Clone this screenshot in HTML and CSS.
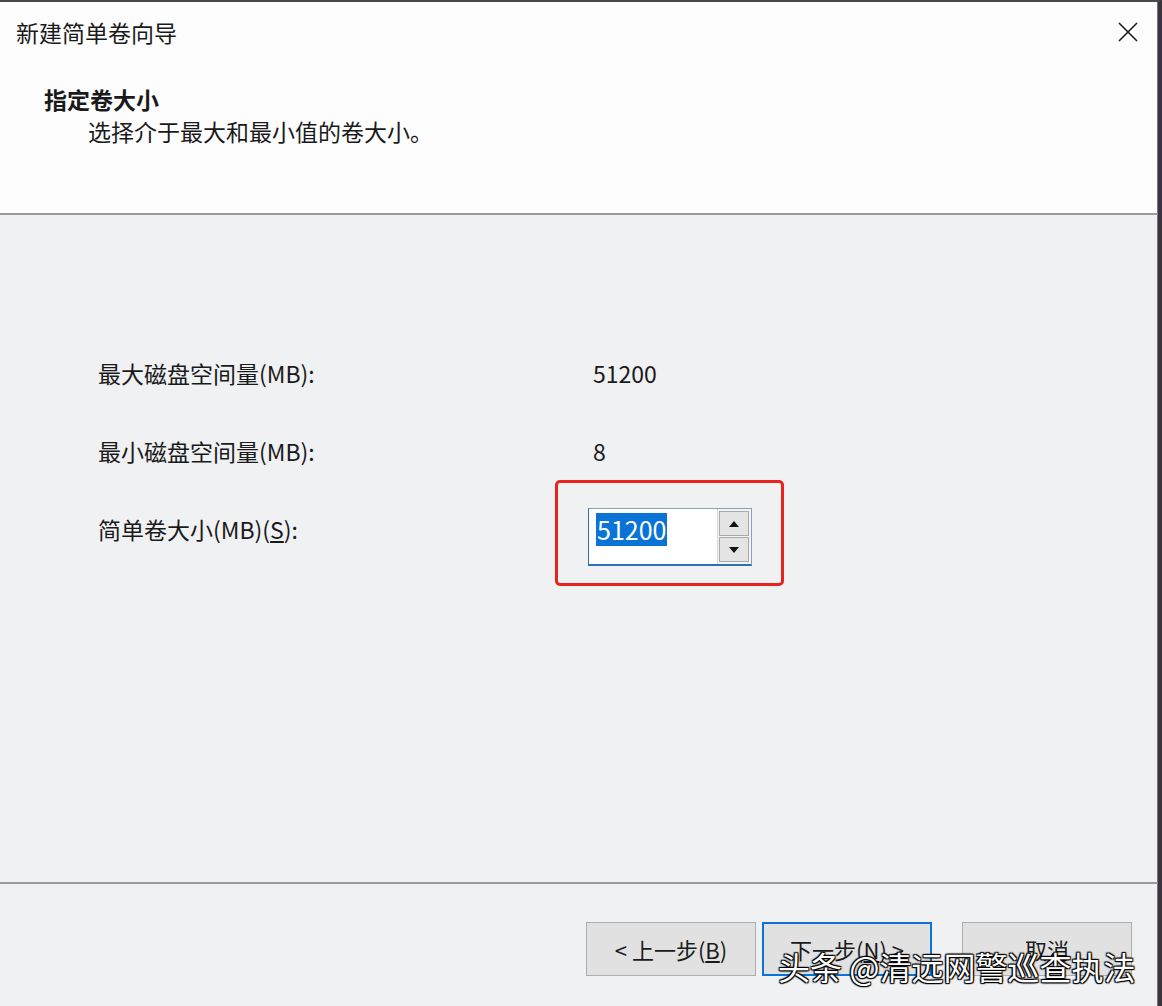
FILE: index.html
```html
<!DOCTYPE html>
<html lang="zh-CN">
<head>
<meta charset="utf-8">
<title>新建简单卷向导</title>
<link rel="stylesheet" href="styles.css">
</head>
<body>
<div class="window">
  <div class="header">
    <div class="titlebar">
      <span class="title">新建简单卷向导</span>
      <svg class="close" width="22" height="22" viewBox="0 0 22 22"><path d="M2 2 L20 20 M20 2 L2 20" stroke="#1a1a1a" stroke-width="1.6" fill="none"/></svg>
    </div>
    <div class="heading">指定卷大小</div>
    <div class="subtitle">选择介于最大和最小值的卷大小。</div>
  </div>
  <div class="content">
    <div class="grid">
      <div class="label">最大磁盘空间量(MB):</div>
      <div class="value">51200</div>
      <div class="label">最小磁盘空间量(MB):</div>
      <div class="value">8</div>
      <div class="label">简单卷大小(MB)(<u>S</u>):</div>
      <div class="value">
        <div class="spin">
          <div class="field"><span class="sel">51200</span></div>
          <div class="arrows">
            <div class="arrow"><svg width="10" height="6" viewBox="0 0 10 6"><path d="M0 6 L5 0 L10 6 Z" fill="#111"/></svg></div>
            <div class="arrow"><svg width="10" height="6" viewBox="0 0 10 6"><path d="M0 0 L10 0 L5 6 Z" fill="#111"/></svg></div>
          </div>
        </div>
      </div>
    </div>
  </div>
  <div class="footer">
    <div class="btn">&lt; 上一步(<u>B</u>)</div>
    <div class="btn default">下一步(<u>N</u>) &gt;</div>
    <div class="btn cancel">取消</div>
  </div>
  <div class="watermark">头条 @清远网警巡查执法</div>
</div>
</body>
</html>
```
FILE: styles.css
```css
* { box-sizing: border-box; }
html, body {
  margin: 0;
  padding: 0;
  width: 1162px;
  height: 1006px;
  overflow: hidden;
  background: #3c3240;
}
body {
  font-family: "Noto Sans CJK SC", "Noto Sans", sans-serif;
  color: #1a1a1a;
  font-size: 23px;
}
.window {
  position: relative;
  width: 1162px;
  height: 1006px;
  border-top: 2px solid #4a4a4a;
  border-right: 4px solid #3c3240;
  display: flex;
  flex-direction: column;
  background: #f0f1f3;
}
.header {
  height: 213px;
  background: #fdfdfe;
  border-bottom: 2px solid #9a9a9a;
  padding: 15px 0 0 0;
  border-right: 1px solid #777;
}
.titlebar {
  display: flex;
  justify-content: space-between;
  align-items: center;
  height: 30px;
  padding: 0 18px 0 16px;
}
.title { line-height: 30px; }
.close { margin-top: -1px; }
.heading {
  font-weight: bold;
  line-height: 30px;
  margin: 37px 0 0 44px;
}
.subtitle {
  line-height: 30px;
  margin: 2px 0 0 88px;
}
.content {
  flex: 1;
  padding: 143px 0 0 98px;
  border-bottom: 2px solid #9a9a9a;
  border-right: 1px solid #777;
}
.grid {
  display: grid;
  grid-template-columns: 495px auto;
  row-gap: 48px;
  align-items: start;
  line-height: 30px;
}
.value { font-size: 23px; }
.spin {
  position: relative;
  display: inline-flex;
  margin: -6px 0 0 -5px;
  height: 58px;
  border: 1px solid #8a9fb8;
  border-left-color: #2f6fb8;
  border-bottom: 2px solid #2f6fb8;
  background: #fff;
}
.spin::after {
  content: "";
  position: absolute;
  left: -34px;
  right: -33px;
  top: -29px;
  bottom: -22px;
  border: 3px solid #e8231e;
  border-radius: 5px;
}
.field {
  width: 128px;
  padding: 4px 0 0 7px;
}
.sel {
  display: inline-block;
  background: #0a74d6;
  color: #fff;
  font-size: 25px;
  line-height: 33px;
  padding: 0 1px;
}
.arrows {
  display: flex;
  flex-direction: column;
  padding: 2px 2px 2px 1px;
  background: #f3f3f3;
  border-left: 1px solid #d8d8d8;
  gap: 1px;
}
.arrow {
  width: 30px;
  flex: 1;
  background: #e4e4e4;
  border: 1px solid #a9a9a9;
  display: flex;
  align-items: center;
  justify-content: center;
}
.footer {
  height: 122px;
  display: flex;
  justify-content: flex-end;
  align-items: flex-start;
  padding: 38px 25px 0 0;
  gap: 6px;
  border-right: 1px solid #777;
}
.btn {
  width: 170px;
  height: 54px;
  background: #e1e1e1;
  border: 1px solid #adadad;
  display: flex;
  align-items: center;
  justify-content: center;
  font-size: 22px;
}
.btn.default {
  border: 2px solid #0a74d6;
}
.btn.cancel { margin-left: 24px; }
.watermark {
  position: absolute;
  left: 778px;
  top: 942px;
  font-size: 32px;
  line-height: 44px;
  color: #fff;
  white-space: nowrap;
  text-shadow: 0 0 2px #000, 1px 1px 1px #000, -1px -1px 1px #000, 1px -1px 1px #000, -1px 1px 1px #000;
}
```
